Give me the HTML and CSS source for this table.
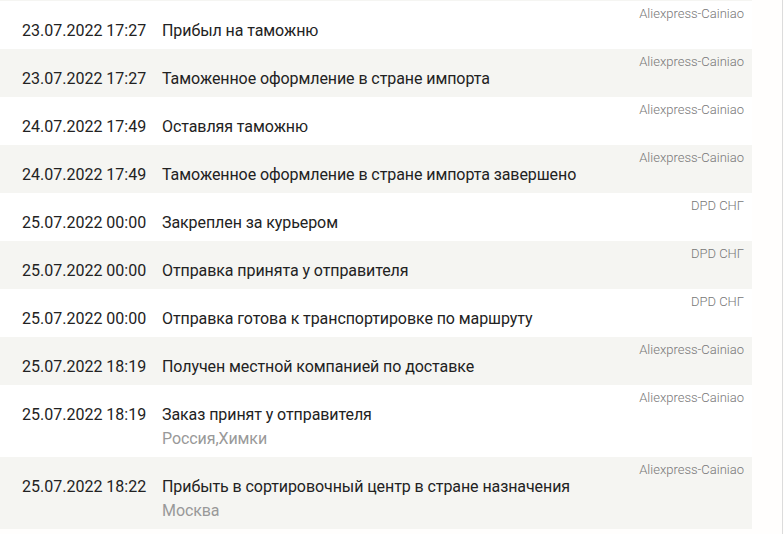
FILE: index.html
```html
<!DOCTYPE html>
<html lang="ru">
<head>
<meta charset="utf-8">
<link rel="stylesheet" href="styles.css">
</head>
<body>
<div class="page">
  <ul class="track">
    <li class="ev"><span class="date">23.07.2022 17:27</span><div class="info"><div class="title">Прибыл на таможню</div></div><span class="carrier">Aliexpress-Cainiao</span></li>
    <li class="ev"><span class="date">23.07.2022 17:27</span><div class="info"><div class="title">Таможенное оформление в стране импорта</div></div><span class="carrier">Aliexpress-Cainiao</span></li>
    <li class="ev"><span class="date">24.07.2022 17:49</span><div class="info"><div class="title">Оставляя таможню</div></div><span class="carrier">Aliexpress-Cainiao</span></li>
    <li class="ev"><span class="date">24.07.2022 17:49</span><div class="info"><div class="title">Таможенное оформление в стране импорта завершено</div></div><span class="carrier">Aliexpress-Cainiao</span></li>
    <li class="ev"><span class="date">25.07.2022 00:00</span><div class="info"><div class="title">Закреплен за курьером</div></div><span class="carrier">DPD СНГ</span></li>
    <li class="ev"><span class="date">25.07.2022 00:00</span><div class="info"><div class="title">Отправка принята у отправителя</div></div><span class="carrier">DPD СНГ</span></li>
    <li class="ev"><span class="date">25.07.2022 00:00</span><div class="info"><div class="title">Отправка готова к транспортировке по маршруту</div></div><span class="carrier">DPD СНГ</span></li>
    <li class="ev"><span class="date">25.07.2022 18:19</span><div class="info"><div class="title">Получен местной компанией по доставке</div></div><span class="carrier">Aliexpress-Cainiao</span></li>
    <li class="ev"><span class="date">25.07.2022 18:19</span><div class="info"><div class="title">Заказ принят у отправителя</div><div class="place">Россия,Химки</div></div><span class="carrier">Aliexpress-Cainiao</span></li>
    <li class="ev"><span class="date">25.07.2022 18:22</span><div class="info"><div class="title">Прибыть в сортировочный центр в стране назначения</div><div class="place">Москва</div></div><span class="carrier">Aliexpress-Cainiao</span></li>
  </ul>
</div>
</body>
</html>
```
FILE: styles.css
```css
html, body {
  margin: 0;
  padding: 0;
  background: #fffefd;
}
body {
  font-family: Roboto, "Noto Sans", sans-serif;
  color: #222;
}
.page {
  width: 782px;
  min-height: 534px;
  border-right: 1px solid #dcdcdc;
}
.track {
  list-style: none;
  margin: 0;
  padding: 0;
  width: 752px;
  border-top: 1px solid #f5f5f2;
}
.ev {
  position: relative;
  display: flex;
  padding: 18px 0 6px 22px;
  background: #fff;
}
.ev:nth-child(even) {
  background: #f5f5f2;
}
.date {
  width: 140px;
  flex: none;
  font-size: 16px;
  line-height: 24px;
}
.info {
  font-size: 16px;
  line-height: 24px;
  letter-spacing: -0.08px;
}
.place {
  color: #999;
}
.carrier {
  position: absolute;
  top: 6px;
  right: 8px;
  font-size: 13px;
  font-weight: 300;
  line-height: 14px;
  color: #777;
}
```
